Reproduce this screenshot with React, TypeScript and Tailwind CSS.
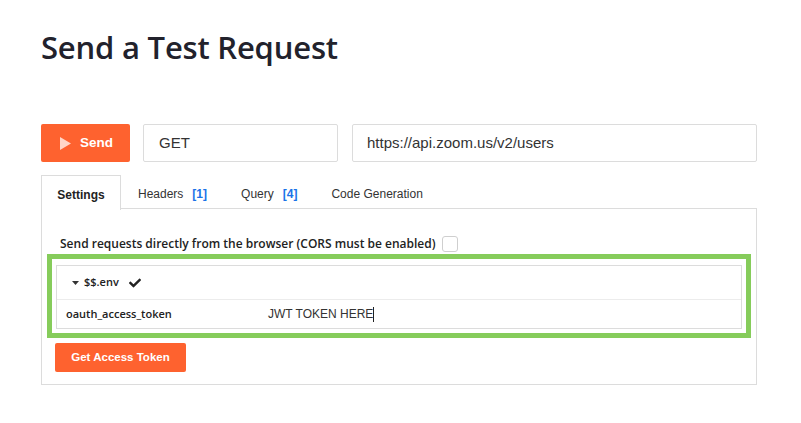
import { FaCheck } from 'react-icons/fa';

const TABS = [
  { id: 'settings', label: 'Settings', count: null },
  { id: 'headers', label: 'Headers', count: 1 },
  { id: 'query', label: 'Query', count: 4 },
  { id: 'codegen', label: 'Code Generation', count: null }
];

const App = () => {
  return (
    <div className="w-[801px] h-[423px] bg-white overflow-hidden pl-[41px] pr-[44px] font-['Liberation_Sans',Arial,sans-serif] text-[#333]">
      <h1 className="pt-[23px] text-[31px] leading-[48px] font-semibold text-[#22222c] font-['Open_Sans',sans-serif] tracking-[-0.2px]">
        Send a Test Request
      </h1>

      {/* request bar */}
      <div className="mt-[53px] flex items-center h-[38px]">
        <button className="h-[38px] w-[89px] bg-[#fe622f] rounded-[2px] flex items-center pl-[19px] gap-[9px] text-white text-[13.5px] font-bold">
          <svg width="11" height="13" viewBox="0 0 11 13" className="fill-[#ffd6c7]">
            <path d="M0 0 L11 6.5 L0 13 Z" />
          </svg>
          Send
        </button>
        <div className="ml-[13px] h-[38px] w-[195px] border border-[#dcdcdc] rounded-[2px] flex items-center pl-[15px] text-[15px] text-[#333]">
          GET
        </div>
        <div className="ml-[14px] h-[38px] flex-1 border border-[#dcdcdc] rounded-[2px] flex items-center pl-[14px] text-[15px] text-[#333]">
          https://api.zoom.us/v2/users
        </div>
      </div>

      {/* tabs */}
      <div className="mt-[13px] flex h-[34px] relative z-10">
        {TABS.map((tab, i) => (
          <div
            key={tab.id}
            className={
              i === 0
                ? 'h-[35px] w-[80px] pt-[3px] border border-b-0 border-[#dcdcdc] bg-white flex items-center justify-center text-[12px] font-bold text-[#222]'
                : 'h-[34px] pt-[3px] px-[17px] flex items-center text-[12px] text-[#333]'
            }
          >
            {tab.label}
            {tab.count !== null && (
              <span className="ml-[9px] text-[#1a73e8] font-bold">[{tab.count}]</span>
            )}
          </div>
        ))}
      </div>

      {/* panel */}
      <div className="border border-[#dcdcdc] h-[177px] -mt-px">
        <div className="pt-[26px] pl-[18px] flex items-center h-[43px] font-['Open_Sans',sans-serif] text-[12px] font-semibold text-[#222]">
          Send requests directly from the browser (CORS must be enabled)
          <span className="ml-[6px] w-[16px] h-[16px] border border-[#cfcfcf] rounded-[3px] bg-white" />
        </div>

        <div className="mt-[2px] mx-[5px] border-[5px] border-[#86cc5b] pt-[6px] pb-[4px] px-[4px]">
          <div className="border border-[#dcdcdc] font-['Open_Sans',sans-serif] text-[11px]">
            <div className="h-[34px] flex items-center pl-[15px] border-b border-[#ececec] text-[#222] font-semibold">
              <svg width="7" height="4" viewBox="0 0 7 4" className="fill-[#333]">
                <path d="M0 0 L7 0 L3.5 4 Z" />
              </svg>
              <span className="ml-[5px]">$$.env</span>
              <FaCheck className="ml-[10px] w-[12px] h-[12px] text-[#222]" />
            </div>
            <div className="h-[28px] flex items-center pl-[9px] text-[#222]">
              <span className="w-[202px] font-semibold">oauth_access_token</span>
              <span className="font-['Liberation_Sans',Arial,sans-serif] text-[12px] text-[#333]">JWT TOKEN HERE</span>
              <span className="w-px h-[15px] bg-[#222]" />
            </div>
          </div>
        </div>

        <button className="mt-[5px] ml-[13px] h-[29px] w-[131px] bg-[#fe622f] rounded-[2px] text-white text-[11.5px] font-bold">
          Get Access Token
        </button>
      </div>
    </div>
  );
};

export default App;
